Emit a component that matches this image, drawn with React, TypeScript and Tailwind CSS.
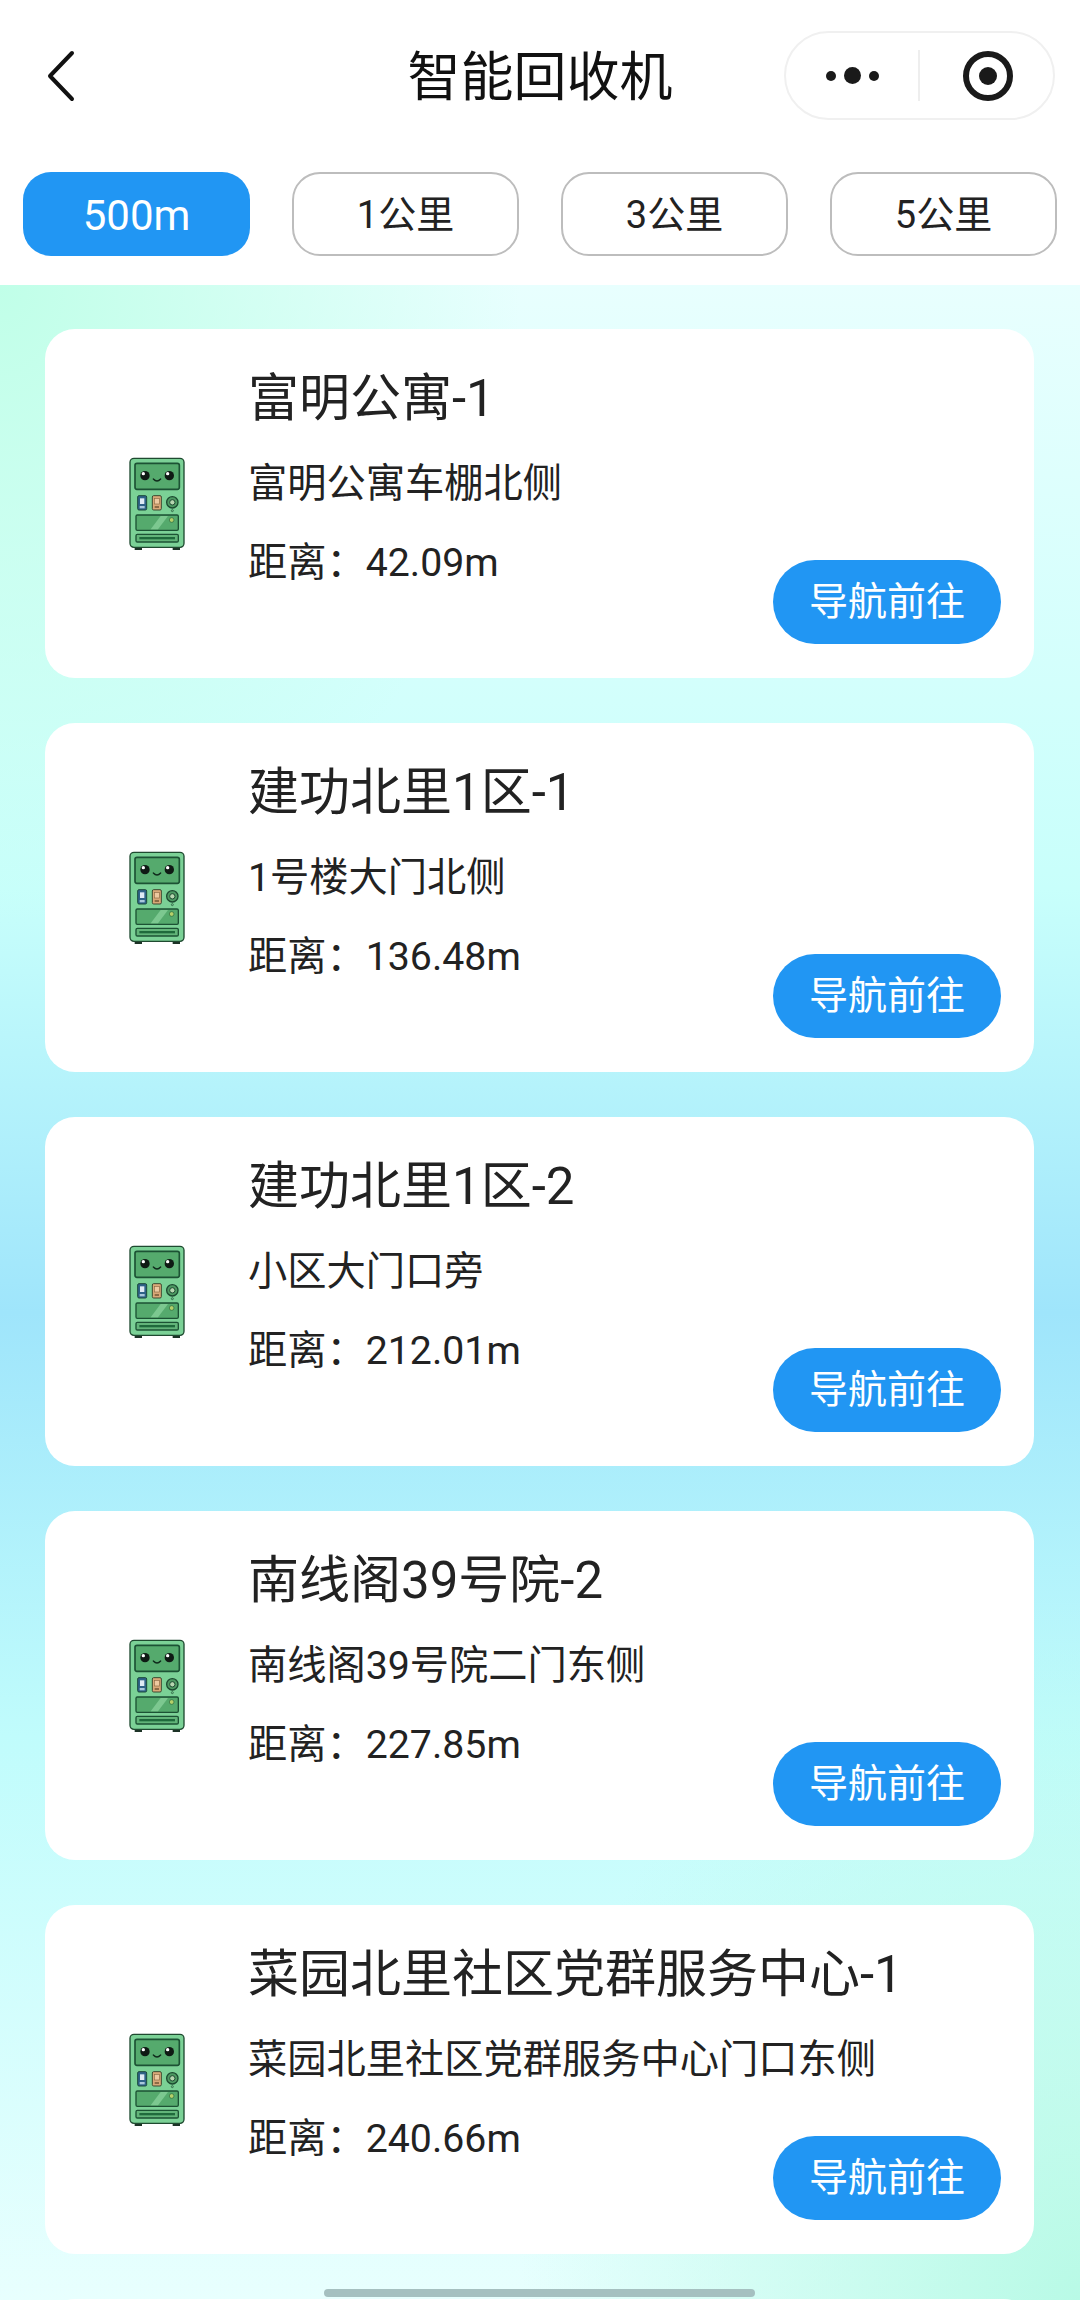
import React from "react";

const tabs = ["500m", "1公里", "3公里", "5公里"];

const stations = [
  { name: "富明公寓-1", place: "富明公寓车棚北侧", distance: "42.09m" },
  { name: "建功北里1区-1", place: "1号楼大门北侧", distance: "136.48m" },
  { name: "建功北里1区-2", place: "小区大门口旁", distance: "212.01m" },
  { name: "南线阁39号院-2", place: "南线阁39号院二门东侧", distance: "227.85m" },
  { name: "菜园北里社区党群服务中心-1", place: "菜园北里社区党群服务中心门口东侧", distance: "240.66m" },
  { name: "", place: "", distance: "" },
];

// little smiling recycling machine
const MachineIcon = () => (
  <svg width="72" height="108" viewBox="0 0 216 324" className="shrink-0">
    <rect x="44" y="288" width="22" height="12" fill="#1d3327" />
    <rect x="158" y="288" width="22" height="12" fill="#1d3327" />
    <rect x="30" y="25" width="162" height="267" rx="12" fill="#7bd196" stroke="#1f4a30" strokeWidth="4" />
    <rect x="45" y="40" width="133" height="78" rx="6" fill="#55aa6d" stroke="#1c5234" strokeWidth="5" />
    <circle cx="75" cy="77" r="14" fill="#0f1a14" />
    <circle cx="148" cy="77" r="14" fill="#0f1a14" />
    <circle cx="70" cy="71" r="5" fill="#fff" />
    <circle cx="143" cy="71" r="5" fill="#fff" />
    <path d="M100 87q11 12 22 0" fill="none" stroke="#0f2a1b" strokeWidth="4" strokeLinecap="round" />
    <rect x="53" y="137" width="27" height="43" rx="4" fill="#2f6288" stroke="#1c4a3c" strokeWidth="3" />
    <rect x="60" y="145" width="13" height="17" fill="#dfeaf5" />
    <rect x="59" y="168" width="15" height="7" fill="#a9c8dc" />
    <rect x="97" y="137" width="27" height="43" rx="4" fill="#d9a878" stroke="#3c4a30" strokeWidth="3" />
    <rect x="103" y="145" width="15" height="17" fill="#eec9a0" stroke="#8d6a44" strokeWidth="2" />
    <rect x="104" y="168" width="13" height="6" fill="#8d6a44" />
    <circle cx="157" cy="157" r="17" fill="#4e9a63" stroke="#1c4a30" strokeWidth="4" />
    <circle cx="157" cy="157" r="8" fill="#b7d6b0" stroke="#1c4a30" strokeWidth="3" />
    <circle cx="157" cy="182" r="3" fill="none" stroke="#1c4a30" strokeWidth="2" />
    <rect x="48" y="195" width="127" height="46" rx="4" fill="#55aa6d" stroke="#1c5234" strokeWidth="4" />
    <path d="M92 238l30-40h22l-30 40z" fill="#7cc890" />
    <circle cx="155" cy="210" r="7" fill="#b5d06a" stroke="#2b6a3c" strokeWidth="2" />
    <rect x="48" y="253" width="127" height="23" rx="4" fill="#62b479" stroke="#1c5234" strokeWidth="4" />
    <rect x="58" y="261" width="107" height="7" fill="#1f6a3c" />
  </svg>
);

const StationCard = ({ name, place, distance }: { name: string; place: string; distance: string }) => (
  <div className="flex h-[349px] shrink-0 items-center rounded-[30px] bg-white pl-[75px] pr-[33px]">
    {name && <MachineIcon />}
    {name && (
      <div className="ml-[56px] min-w-0 flex-1 self-start pt-[40px] text-[#222]">
        <div className="whitespace-nowrap text-[51px] leading-[60px]">{name}</div>
        <div className="mt-[30px] whitespace-nowrap text-[39.25px] leading-[50px]">{place}</div>
        <div className="mt-[29px] whitespace-nowrap text-[39.25px] leading-[50px]">距离：{distance}</div>
      </div>
    )}
    {name && (
      <button className="mb-[34px] h-[84px] w-[228px] shrink-0 self-end rounded-full bg-[#2196f3] text-[39px] text-white">
        导航前往
      </button>
    )}
  </div>
);

export default function App() {
  return (
    <div className="relative h-[2300px] w-[1080px] overflow-hidden bg-white font-['Roboto','Noto_Sans_CJK_SC',sans-serif]">
      <div className="h-[285px] pt-[31px]">
        <div className="grid h-[89px] grid-cols-[271px_1fr_271px] items-center pl-[46px] pr-[25px]">
          <svg width="32" height="52" viewBox="0 0 32 52" fill="none">
            <path d="M26 3 4 26l22 23" stroke="#111" strokeWidth="4" strokeLinecap="round" strokeLinejoin="round" />
          </svg>
          <div className="mt-[5px] justify-self-center pr-[21px] text-[53px] leading-[60px] text-[#111]">智能回收机</div>
          <div className="flex h-[89px] w-[271px] items-center justify-self-end rounded-full border-2 border-[#f0f0f0]">
            <div className="flex w-[132px] items-center justify-center gap-[8px]">
              <span className="h-[10px] w-[10px] rounded-full bg-[#1a1a1a]" />
              <span className="h-[17px] w-[17px] rounded-full bg-[#1a1a1a]" />
              <span className="h-[10px] w-[10px] rounded-full bg-[#1a1a1a]" />
            </div>
            <div className="h-[51px] w-[2px] bg-[#eeeeee]" />
            <div className="flex flex-1 items-center justify-center pl-[2px]">
              <div className="flex h-[50px] w-[50px] items-center justify-center rounded-full border-[6px] border-[#1a1a1a]">
                <span className="h-[18px] w-[18px] rounded-full bg-[#1a1a1a]" />
              </div>
            </div>
          </div>
        </div>
        <div className="mt-[52px] flex justify-between pl-[23px] pr-[23px]">
          {tabs.map((tab, i) => (
            <div
              key={tab}
              className={
                i === 0
                  ? "flex h-[84px] w-[227px] items-center justify-center rounded-[28px] bg-[#2196f3] pt-[2px] text-[42px] text-white"
                  : "flex h-[84px] w-[227px] items-center justify-center rounded-[28px] border-2 border-[#bdbdbd] bg-white pt-[2px] text-[38px] text-[#222]"
              }
            >
              {tab}
            </div>
          ))}
        </div>
      </div>
      <div className="flex h-[2015px] flex-col gap-[45px] bg-[radial-gradient(ellipse_520px_640px_at_0%_0%,#c0ffe8_0%,#c0ffe800_100%),radial-gradient(ellipse_560px_700px_at_100%_100%,#b8fae6_0%,#b8fae600_100%),linear-gradient(to_bottom,#e8fffe_0%,#c8fffb_30%,#9fe5fb_51%,#c0fcfc_72%,#e8fffe_100%)] pl-[45px] pr-[46px] pt-[44px]">
        {stations.map((s, i) => (
          <StationCard key={i} {...s} />
        ))}
      </div>
      <div className="absolute bottom-[3px] left-[324px] h-[8px] w-[431px] rounded-full bg-[#a5c0c0]" />
    </div>
  );
}
